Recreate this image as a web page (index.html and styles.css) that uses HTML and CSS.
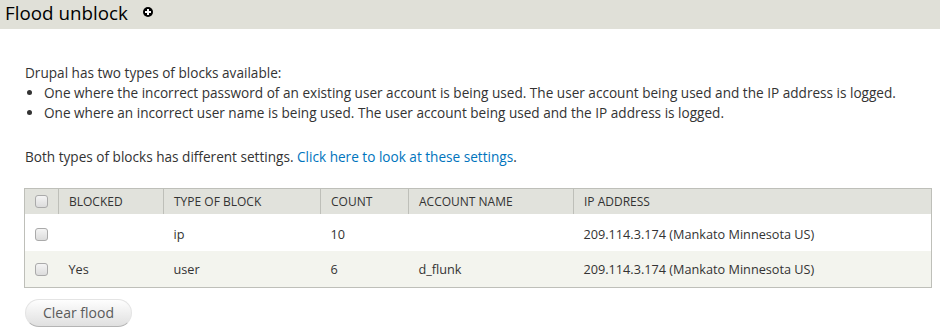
FILE: index.html
```html
<!DOCTYPE html>
<html>
<head>
    <title>Flood unblock</title>
    <link rel="stylesheet" href="styles.css">
</head>
<body>
    <div class="page-title">
        <h1>Flood unblock</h1>
        <span class="add-icon">
            <svg width="10" height="10" viewBox="0 0 10 10"><circle cx="5" cy="5" r="5" fill="#000"/><rect x="4" y="2" width="2" height="6" fill="#fff"/><rect x="2" y="4" width="6" height="2" fill="#fff"/></svg>
        </span>
    </div>
    <div class="content">
        <p class="intro">Drupal has two types of blocks available:</p>
        <ul>
            <li>One where the incorrect password of an existing user account is being used. The user account being used and the IP address is logged.</li>
            <li>One where an incorrect user name is being used. The user account being used and the IP address is logged.</li>
        </ul>
        <p class="settings">Both types of blocks has different settings. <a href="#">Click here to look at these settings</a>.</p>

        <table class="flood-table">
            <thead>
                <tr>
                    <th class="select"><span class="checkbox"></span></th>
                    <th class="col-blocked">Blocked</th>
                    <th class="col-type">Type of block</th>
                    <th class="col-count">Count</th>
                    <th class="col-account">Account name</th>
                    <th>IP address</th>
                </tr>
            </thead>
            <tbody>
                <tr>
                    <td class="select"><span class="checkbox"></span></td>
                    <td></td>
                    <td>ip</td>
                    <td>10</td>
                    <td></td>
                    <td>209.114.3.174 (Mankato Minnesota US)</td>
                </tr>
                <tr class="even">
                    <td class="select"><span class="checkbox"></span></td>
                    <td>Yes</td>
                    <td>user</td>
                    <td>6</td>
                    <td>d_flunk</td>
                    <td>209.114.3.174 (Mankato Minnesota US)</td>
                </tr>
            </tbody>
        </table>

        <button class="button">Clear flood</button>
    </div>
</body>
</html>
```

FILE: styles.css
```css
body {
    font-family: "Open Sans", sans-serif;
    font-size: 13.6px;
    color: #333;
    margin: 0;
    background-color: #fff;
}
.page-title {
    display: flex;
    align-items: flex-start;
    height: 29px;
    padding: 0 5px;
    background-color: #e0e0d8;
}
h1 {
    margin: 0;
    font-weight: normal;
    font-size: 18.8px;
    line-height: 26px;
    color: #000;
}
.add-icon {
    display: flex;
    margin: 7px 0 0 15px;
}
.content {
    padding: 0 8px 0 25px;
}
p {
    margin: 0;
    line-height: 20px;
}
.intro {
    margin-top: 34px;
}
ul {
    margin: 0;
    padding: 0 0 0 19px;
}
li {
    line-height: 20px;
}
.settings {
    margin-top: 24px;
}
a {
    color: #0074bd;
    text-decoration: none;
}
.flood-table {
    width: 908px;
    margin: 21px 0 0 -1px;
    border-collapse: collapse;
    border: 1px solid #bebfb9;
    font-size: 12.7px;
}
th {
    background-color: #e1e2dc;
    border-right: 1px solid #bebfb9;
    text-align: left;
    text-transform: uppercase;
    font-weight: normal;
    font-size: 12px;
    height: 25px;
    padding: 0 10px;
}
td {
    height: 36px;
    padding: 0 10px;
}
tbody tr:first-child td {
    height: 34px;
    padding-top: 3px;
}
tr.even td {
    background-color: #f3f4ee;
}
.select {
    width: 13px;
}
.col-blocked { width: 84px; }
.col-type { width: 136px; }
.col-count { width: 67px; }
.col-account { width: 144px; }
.checkbox {
    display: block;
    width: 11px;
    height: 11px;
    border: 1px solid #aaa;
    border-radius: 3px;
    background: linear-gradient(#f4f4f4, #dcdcdc);
}
.button {
    margin-top: 11px;
    padding: 3px 17px 4px;
    font-family: inherit;
    font-size: 14px;
    color: #5a5a5a;
    border: 1px solid #e4e4e4;
    border-bottom-color: #b4b4b4;
    border-radius: 20px;
    background: linear-gradient(#fefefe, #e0e0e0);
}
```
